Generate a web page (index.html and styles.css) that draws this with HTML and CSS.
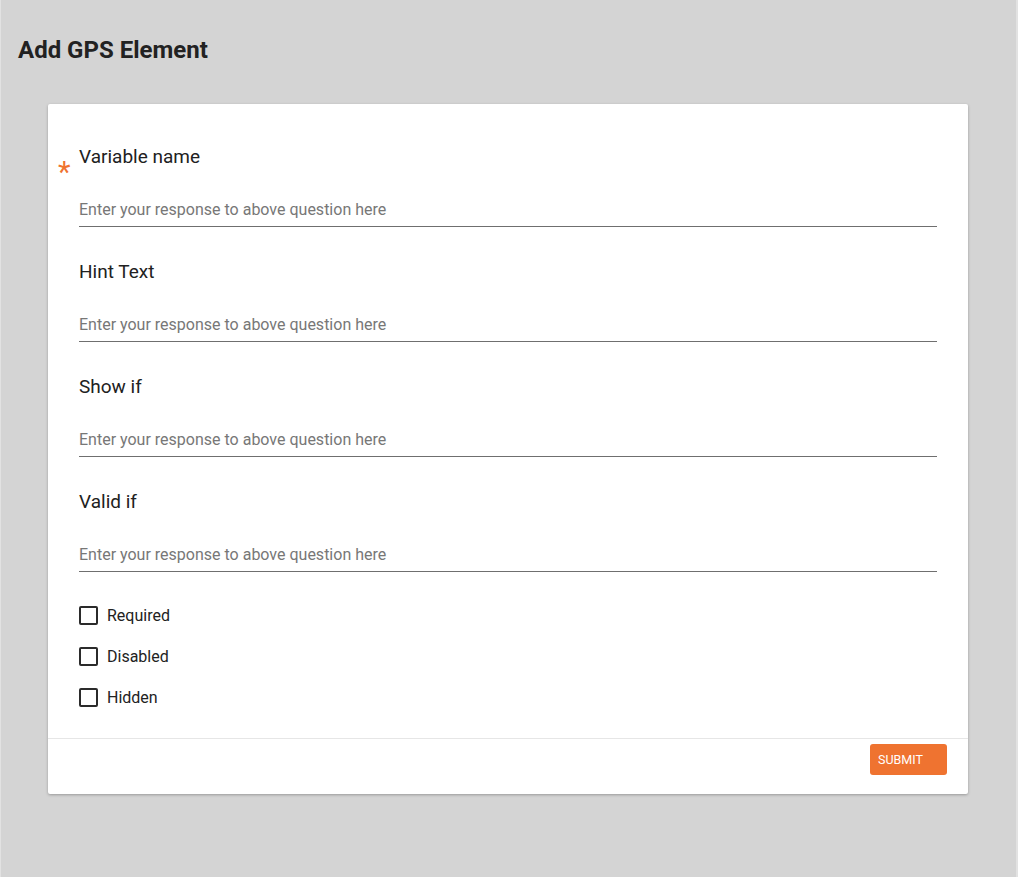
FILE: index.html
```html
<!DOCTYPE html>
<html>
<head>
<meta charset="utf-8">
<link rel="stylesheet" href="styles.css">
</head>
<body>
<div class="page">
  <h1 class="title">Add GPS Element</h1>
  <div class="card">
    <div class="card-body">
      <div class="field">
        <span class="required-mark">*</span>
        <label class="field-label">Variable name</label>
        <input class="field-input" type="text" placeholder="Enter your response to above question here">
      </div>
      <div class="field">
        <label class="field-label">Hint Text</label>
        <input class="field-input" type="text" placeholder="Enter your response to above question here">
      </div>
      <div class="field">
        <label class="field-label">Show if</label>
        <input class="field-input" type="text" placeholder="Enter your response to above question here">
      </div>
      <div class="field">
        <label class="field-label">Valid if</label>
        <input class="field-input" type="text" placeholder="Enter your response to above question here">
      </div>
      <div class="checks">
        <label class="check-row"><span class="box"></span><span class="check-text">Required</span></label>
        <label class="check-row"><span class="box"></span><span class="check-text">Disabled</span></label>
        <label class="check-row"><span class="box"></span><span class="check-text">Hidden</span></label>
      </div>
    </div>
    <div class="card-footer">
      <button class="submit">SUBMIT</button>
    </div>
  </div>
</div>
</body>
</html>
```

FILE: styles.css
```css
html, body {
  margin: 0;
  padding: 0;
  height: 100%;
}
body {
  background: #d4d4d4;
  font-family: Roboto, "Liberation Sans", sans-serif;
  color: #212121;
}
.page {
  min-height: 877px;
  box-sizing: border-box;
  border-left: 1px solid #e2e2e2;
  border-right: 2px solid #e2e2e2;
  width: 1018px;
  padding: 35px 0 0 17px;
}
.title {
  margin: 0;
  font-size: 24px;
  font-weight: 700;
  line-height: 30px;
  color: #222;
}
.card {
  margin: 39px 0 0 30px;
  width: 920px;
  background: #fff;
  border-radius: 2px;
  box-shadow: 0 1px 3px rgba(0,0,0,0.28);
}
.card-body {
  padding: 41px 31px 20px 31px;
}
.field {
  position: relative;
  display: flex;
  flex-direction: column;
  margin-bottom: 33px;
}
.field:nth-child(4) {
  margin-bottom: 23px;
}
.required-mark {
  position: absolute;
  left: -21px;
  top: 13px;
  color: #ef7330;
  font-size: 29px;
  line-height: 29px;
}
.field-label {
  font-size: 19px;
  line-height: 24px;
  color: #212121;
  margin-bottom: 25px;
}
.field-input {
  border: none;
  border-bottom: 1px solid #6f6f6f;
  height: 33px;
  box-sizing: border-box;
  padding: 0 0 2px 0;
  font-family: Roboto, "Liberation Sans", sans-serif;
  font-size: 16px;
  outline: none;
  background: transparent;
}
.field-input::placeholder {
  color: #777;
}
.checks {
  display: flex;
  flex-direction: column;
}
.check-row {
  display: flex;
  align-items: center;
  height: 41px;
}
.box {
  width: 15px;
  height: 15px;
  border: 2px solid #2b2b2b;
  border-radius: 2px;
  margin-right: 9px;
}
.check-text {
  font-size: 16px;
  color: #222;
}
.card-footer {
  border-top: 1px solid #e6e6e6;
  display: flex;
  justify-content: flex-end;
  padding: 5px 21px 19px 0;
}
.submit {
  width: 77px;
  height: 31px;
  background: #ef7330;
  color: #fff;
  border: none;
  border-radius: 3px;
  font-family: Roboto, "Liberation Sans", sans-serif;
  font-size: 12.5px;
  text-align: left;
  padding: 0 0 0 8px;
}
```
